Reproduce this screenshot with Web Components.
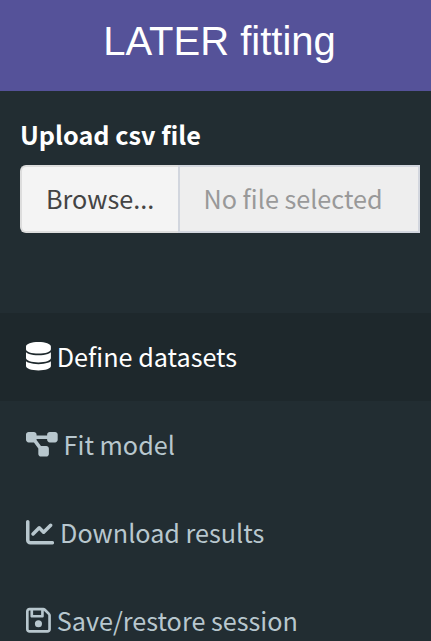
<!DOCTYPE html>
<html lang="en">
<head>
<meta charset="utf-8">
<title>LATER fitting</title>
<style>
body { margin: 0; height: 641px; overflow: hidden; background: #222d32; font-family: "Noto Sans CJK SC", "Noto Sans", sans-serif; font-size: 25.2px; }
</style>
</head>
<body>
<later-app></later-app>
<script>
const define = (name, html) => {
  const tpl = document.createElement('template');
  tpl.innerHTML = html;
  customElements.define(name, class extends HTMLElement {
    constructor() {
      super();
      this.attachShadow({ mode: 'open' }).append(tpl.content.cloneNode(true));
    }
  });
};

define('app-header', `<style>
:host { display: flex; box-sizing: border-box; height: 91px; padding: 0 0 10px 8px; justify-content: center; align-items: center; background: #555299; color: #fff; font: 40px/46px "Liberation Sans", Arial, sans-serif; white-space: nowrap; }
</style><span><slot></slot></span>`);

define('file-input', `<style>
:host { display: block; padding: 24px 11px 0 20px; }
.label { display: block; height: 42px; line-height: 38px; margin-bottom: 8px; font-weight: 700; color: #fff; white-space: nowrap; }
.group { display: flex; height: 68px; }
.button, .name { box-sizing: border-box; line-height: 62px; white-space: nowrap; }
.button { width: 158px; padding-left: 24px; border: 2px solid #ddd; border-right: 0; border-radius: 6px 0 0 6px; background: #f4f4f4; color: #444; }
.name { flex: 1; padding-left: 23.5px; border: 2px solid #d2d6de; background: #eee; color: #999; }
</style><span class="label"><slot></slot></span>
<div class="group"><div class="button"><slot name="button"></slot></div><div class="name"><slot name="name"></slot></div></div>`);

define('menu-item', `<style>
:host { display: flex; box-sizing: border-box; height: 88px; padding: 0 0 2px 26px; gap: 5.9px; align-items: center; color: #b8c7ce; white-space: nowrap; line-height: 40px; }
:host([active]) { background: #1e282c; color: #fff; }
::slotted(svg) { display: block; height: 28.5px; margin-top: 0.5px; fill: currentColor; flex: none; }
</style><slot name="icon"></slot><span><slot></slot></span>`);

define('side-menu', `<style>
:host { display: block; margin-top: 80px; }
</style><slot></slot>`);

define('later-app', `<style>
:host { display: block; width: 431px; height: 641px; overflow: hidden; }
</style>
<app-header>LATER fitting</app-header>
<file-input>Upload csv file<span slot="button">Browse...</span><span slot="name">No file selected</span></file-input>
<side-menu>
<menu-item active><svg slot="icon" viewBox="0 0 448 512" width="24.9"><path d="M448 80v48c0 44.2-100.3 80-224 80S0 172.2 0 128V80C0 35.8 100.3 0 224 0S448 35.8 448 80zM393.2 214.7c20.8-7.4 39.9-16.9 54.8-28.6V288c0 44.2-100.3 80-224 80S0 332.2 0 288V186.1c14.9 11.8 34 21.2 54.8 28.6C99.7 230.7 159.5 240 224 240s124.3-9.3 169.2-25.3zM0 346.1c14.9 11.8 34 21.2 54.8 28.6C99.7 390.7 159.5 400 224 400s124.3-9.3 169.2-25.3c20.8-7.4 39.9-16.9 54.8-28.6V432c0 44.2-100.3 80-224 80S0 476.2 0 432V346.1z"/></svg>Define datasets</menu-item>
<menu-item><svg slot="icon" viewBox="0 0 576 512" width="31.7"><path d="M0 80C0 53.5 21.5 32 48 32h96c26.5 0 48 21.5 48 48V96H384V80c0-26.5 21.5-48 48-48h96c26.5 0 48 21.5 48 48v96c0 26.5-21.5 48-48 48H432c-26.5 0-48-21.5-48-48V160H192v16c0 1.7-.1 3.4-.3 5L272 288h96c26.5 0 48 21.5 48 48v96c0 26.5-21.5 48-48 48H272c-26.5 0-48-21.5-48-48V336c0-1.7 .1-3.4 .3-5L144 224H48c-26.5 0-48-21.5-48-48V80z"/></svg>Fit model</menu-item>
<menu-item><svg slot="icon" viewBox="0 0 512 512" width="28.2"><path d="M64 64c0-17.7-14.3-32-32-32S0 46.3 0 64V400c0 44.2 35.8 80 80 80H480c17.7 0 32-14.3 32-32s-14.3-32-32-32H80c-8.8 0-16-7.2-16-16V64zm406.6 86.6c12.5-12.5 12.5-32.8 0-45.3s-32.8-12.5-45.3 0L320 210.7l-57.4-57.4c-12.5-12.5-32.8-12.5-45.3 0l-112 112c-12.5 12.5-12.5 32.8 0 45.3s32.8 12.5 45.3 0L240 221.3l57.4 57.4c12.5 12.5 32.8 12.5 45.3 0l128-128z"/></svg>Download results</menu-item>
<menu-item><svg slot="icon" viewBox="0 0 448 512" width="24.9"><path d="M48 96V416c0 8.8 7.2 16 16 16H384c8.8 0 16-7.2 16-16V170.5c0-4.2-1.7-8.3-4.7-11.3l33.9-33.9c12 12 18.7 28.3 18.7 45.3V416c0 35.3-28.7 64-64 64H64c-35.3 0-64-28.7-64-64V96C0 60.7 28.7 32 64 32H309.5c17 0 33.3 6.7 45.3 18.7l74.5 74.5-33.9 33.9L320.8 84.7c-.3-.3-.5-.5-.8-.8V184c0 13.3-10.7 24-24 24H104c-13.3 0-24-10.7-24-24V80H64c-8.8 0-16 7.2-16 16zm80-16v80H272V80H128zm32 240a64 64 0 1 1 128 0 64 64 0 1 1-128 0z"/></svg>Save/restore session</menu-item>
</side-menu>`);
</script>
</body>
</html>
